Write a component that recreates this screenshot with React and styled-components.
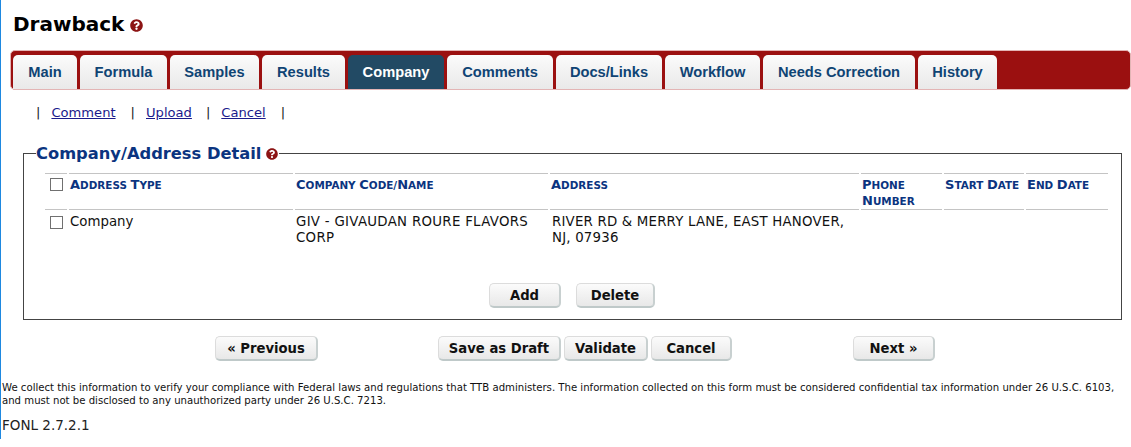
import React from 'react';
import styled, { createGlobalStyle } from 'styled-components';
import { FaQuestionCircle } from 'react-icons/fa';

const GlobalStyle = createGlobalStyle`
    html, body {
        margin: 0;
        padding: 0;
        background: #fff;
    }
    body {
        font-family: "DejaVu Sans", Verdana, sans-serif;
        font-size: 13px;
        color: #111;
    }
`

const Page = styled.div`
    width: 1130px;
    height: 439px;
    border-left: 1px solid #1e88e0;
    overflow: hidden;
`

const Title = styled.h1`
    display: flex;
    align-items: flex-start;
    gap: 6px;
    margin: 0;
    padding: 12px 0 0 12px;
    height: 50px;
    box-sizing: border-box;
    font-size: 20px;
    line-height: 24px;
    font-weight: bold;
    color: #000;
`

const TitleIcon = styled(FaQuestionCircle)`
    color: #8c1414;
    flex: none;
    margin-top: 7px;
`

const LegendIcon = styled(FaQuestionCircle)`
    color: #8c1414;
    flex: none;
`

const TabBar = styled.div`
    display: flex;
    align-items: flex-end;
    gap: 3px;
    height: 40px;
    margin-left: 9px;
    padding: 0 0 0 2px;
    box-sizing: border-box;
    background: #9b1010;
    border: 1px solid #e3b5b5;
    border-radius: 5px;
`

const Tab = styled.div`
    width: ${props => props.$w}px;
    height: 34px;
    box-sizing: border-box;
    padding-top: 8px;
    text-align: center;
    font-family: "Liberation Sans", Arial, sans-serif;
    font-size: 14.67px;
    line-height: 18px;
    font-weight: bold;
    border-radius: 5px 5px 0 0;
    color: ${props => props.$active ? '#fff' : '#0f4474'};
    background: ${props => props.$active ? '#224a64' : 'linear-gradient(#fbfbfb, #e9e9e9)'};
`

const LinkRow = styled.div`
    display: flex;
    align-items: center;
    height: 18px;
    margin-top: 14px;
    padding-left: 35px;
    font-size: 13.1px;
    line-height: 18px;
`

const Pipe = styled.span`
    color: #222;
    margin-right: ${props => props.$gap}px;
`

const TextLink = styled.a`
    color: #1a1a8c;
    text-decoration: underline;
    margin-right: ${props => props.$gap}px;
`

const Panel = styled.fieldset`
    width: 1099px;
    height: 178px;
    box-sizing: border-box;
    margin: 20px 0 0 22px;
    padding: 0 13px 0 21px;
    border: 1px solid #444;
    min-inline-size: auto;
`

const PanelTitle = styled.legend`
    display: flex;
    align-items: center;
    gap: 5px;
    padding: 2px 1px 0 0;
    margin-left: -9px;
    font-size: 16.3px;
    line-height: 20px;
    font-weight: bold;
    color: #0b3480;
`

const AddressGrid = styled.div`
    display: grid;
    grid-template-columns: 22px 224px 253px 309px 81px 80px 82px;
    column-gap: 2px;
    margin-top: 9px;
`

const HeadCell = styled.div`
    min-height: 37px;
    box-sizing: border-box;
    padding: 3px 1px 0 1px;
    border-top: 1px solid #c4c4c4;
    border-bottom: 1px solid #c4c4c4;
    font-size: 13px;
    line-height: 16px;
    font-weight: bold;
    text-transform: uppercase;
    color: #0b3480;
`

const SmallPart = styled.span`
    font-size: 10.4px;
`

const BodyCell = styled.div`
    padding: 4px 1px 0 ${props => props.$inset || 1}px;
    font-size: 13.33px;
    line-height: 16px;
    letter-spacing: ${props => props.$spacing || 0}px;
    color: #111;
`

const CheckCell = styled.div`
    padding: 6px 0 0 5px;
`

const CheckHead = styled(CheckCell)`
    min-height: 37px;
    box-sizing: border-box;
    padding-top: 4px;
    border-top: 1px solid #c4c4c4;
    border-bottom: 1px solid #c4c4c4;
`

const CheckBox = styled.span`
    display: block;
    width: 13px;
    height: 13px;
    box-sizing: border-box;
    border: 1px solid #707070;
    background: #fff;
`

const PanelActions = styled.div`
    display: flex;
    justify-content: center;
    gap: 15px;
    margin-top: 37px;
    padding-right: 9px;
`

const Button = styled.button`
    width: ${props => props.$w}px;
    height: 25px;
    box-sizing: border-box;
    padding: 0;
    font-family: "DejaVu Sans", Verdana, sans-serif;
    font-size: 13.2px;
    font-weight: bold;
    color: #111;
    background: linear-gradient(#fbfbfb, #e8e8e8);
    border: 1px solid #dcdcdc;
    border-bottom: 2px solid #bfc9c9;
    border-right: 2px solid #c8d0d0;
    border-radius: 5px;
`

const WizardRow = styled.div`
    display: grid;
    grid-template-columns: 103px 1fr 82px;
    align-items: center;
    width: 720px;
    margin: 16px 0 0 214px;
`

const WizardMiddle = styled.div`
    display: flex;
    justify-content: center;
    gap: 3px;
    padding-right: 1px;
`

const Notice = styled.p`
    margin: 20px 0 0 1px;
    font-size: 10.15px;
    line-height: 13px;
    white-space: nowrap;
    color: #111;
`

const Version = styled.div`
    margin: 10px 0 0 1px;
    font-size: 13.5px;
    line-height: 16px;
    color: #222;
`

const tabs = [
    { name: 'Main', w: 64 },
    { name: 'Formula', w: 87 },
    { name: 'Samples', w: 89 },
    { name: 'Results', w: 83 },
    { name: 'Company', w: 96, active: true },
    { name: 'Comments', w: 106 },
    { name: 'Docs/Links', w: 106 },
    { name: 'Workflow', w: 95 },
    { name: 'Needs Correction', w: 152 },
    { name: 'History', w: 79 },
]

const heads = ['Address Type', 'Company Code/Name', 'Address', 'Phone Number', 'Start Date', 'End Date']

// first letter of each word stays full size, the rest goes small
const SmallCaps = ({ text }) => (
    <>
        {text.split(/(?=[A-Z])/).map(part => (
            <React.Fragment key={part}>
                {part[0]}<SmallPart>{part.slice(1)}</SmallPart>
            </React.Fragment>
        ))}
    </>
)

const App = () => {
    return (
        <Page>
            <GlobalStyle />
            <Title>Drawback <TitleIcon size={13} /></Title>
            <TabBar>
                {tabs.map(t => <Tab key={t.name} $w={t.w} $active={t.active}>{t.name}</Tab>)}
            </TabBar>
            <LinkRow>
                <Pipe $gap={11}>|</Pipe>
                <TextLink $gap={15}>Comment</TextLink>
                <Pipe $gap={11}>|</Pipe>
                <TextLink $gap={14}>Upload</TextLink>
                <Pipe $gap={11}>|</Pipe>
                <TextLink $gap={15}>Cancel</TextLink>
                <Pipe $gap={0}>|</Pipe>
            </LinkRow>
            <Panel>
                <PanelTitle>Company/Address Detail <LegendIcon size={12} /></PanelTitle>
                <AddressGrid>
                    <CheckHead><CheckBox /></CheckHead>
                    {heads.map(h => <HeadCell key={h}><SmallCaps text={h} /></HeadCell>)}
                    <CheckCell><CheckBox /></CheckCell>
                    <BodyCell>Company</BodyCell>
                    <BodyCell $spacing={0.3}>GIV - GIVAUDAN ROURE FLAVORS CORP</BodyCell>
                    <BodyCell $spacing={0.2} $inset={2}>RIVER RD &amp; MERRY LANE, EAST HANOVER, NJ, 07936</BodyCell>
                    <BodyCell />
                    <BodyCell />
                    <BodyCell />
                </AddressGrid>
                <PanelActions>
                    <Button $w={72}>Add</Button>
                    <Button $w={79}>Delete</Button>
                </PanelActions>
            </Panel>
            <WizardRow>
                <Button $w={103}>« Previous</Button>
                <WizardMiddle>
                    <Button $w={123}>Save as Draft</Button>
                    <Button $w={84}>Validate</Button>
                    <Button $w={81}>Cancel</Button>
                </WizardMiddle>
                <Button $w={82}>Next »</Button>
            </WizardRow>
            <Notice>
                We collect this information to verify your compliance with Federal laws and regulations that TTB administers. The information collected on this form must be considered confidential tax information under 26 U.S.C. 6103,<br />
                and must not be disclosed to any unauthorized party under 26 U.S.C. 7213.
            </Notice>
            <Version>FONL 2.7.2.1</Version>
        </Page>
    )
}

export default App;
